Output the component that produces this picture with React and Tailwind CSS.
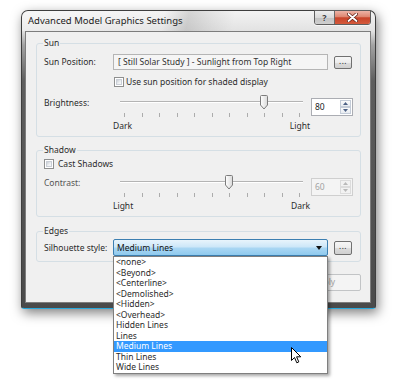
import React from "react";

function DotsButton() {
  return (
    <div className="w-[18px] h-[13px] rounded-[2px] border border-[#707070] bg-[linear-gradient(180deg,#f6f6f6_0%,#ececec_50%,#dcdcdc_51%,#d0d0d0_100%)] flex items-center justify-center">
      <span className="text-[8px] leading-none text-[#222] -mt-[3px] tracking-[0.5px]">...</span>
    </div>
  );
}

function Checkbox() {
  return (
    <div className="w-[10px] h-[10px] border border-[#8e8f8f] bg-white p-[1px] shrink-0">
      <div className="w-full h-full border border-[#c9ced6] bg-[linear-gradient(135deg,#c9ced5_0%,#eef0f2_60%,#f8f8f8_100%)]" />
    </div>
  );
}

function Slider({ id, thumb, left, right }) {
  const ticks = Array.from({ length: 11 }, (_, i) => 11 + i * 17.5);
  const cx = thumb;
  const d = `M ${cx - 3.5} 1.5 Q ${cx - 3.5} 0.5 ${cx - 2.5} 0.5 L ${cx + 2.5} 0.5 Q ${cx + 3.5} 0.5 ${cx + 3.5} 1.5 L ${cx + 3.5} 10 L ${cx} 14 L ${cx - 3.5} 10 Z`;
  return (
    <div className="w-[197px] flex flex-col shrink-0">
      <svg width="197" height="24" className="block">
        <defs>
          <linearGradient id={id} x1="0" y1="0" x2="1" y2="0">
            <stop offset="0" stopColor="#ffffff" />
            <stop offset="1" stopColor="#d9d9d9" />
          </linearGradient>
        </defs>
        <rect x="7" y="6" width="183" height="1" fill="#b4b4b4" />
        <rect x="7" y="7" width="183" height="1" fill="#ffffff" />
        {ticks.map((t) => (
          <rect key={t} x={Math.round(t)} y="18" width="1" height="4" fill="#acacac" />
        ))}
        <path d={d} fill={`url(#${id})`} stroke="#7c7c7c" strokeWidth="1" />
      </svg>
      <div className="mt-[1px] h-[12px] flex justify-between text-[8.5px] leading-[12px] text-[#2b2b2b]">
        <span>{left}</span>
        <span>{right}</span>
      </div>
    </div>
  );
}

function SpinArrow({ up, color }) {
  return (
    <svg width="5" height="3" className="block">
      {up ? <path d="M0 3 L2.5 0 L5 3 Z" fill={color} /> : <path d="M0 0 L2.5 3 L5 0 Z" fill={color} />}
    </svg>
  );
}

function Spin({ value, disabled }) {
  const arrow = disabled ? "#b9b9b9" : "#4d6185";
  return (
    <div
      className={
        disabled
          ? "w-[42px] h-[18px] border border-[#cfcfcf] bg-[#f4f4f4] flex shrink-0"
          : "w-[42px] h-[18px] border border-[#abadb3] bg-white flex shrink-0"
      }
    >
      <div
        className={
          disabled
            ? "flex-1 pl-[3px] text-[8.5px] leading-[16px] text-[#a3a3a3]"
            : "flex-1 pl-[3px] text-[8.5px] leading-[16px] text-[#222]"
        }
      >
        {value}
      </div>
      <div className="w-[13px] flex flex-col p-[1px] gap-[0px]">
        <div
          className={
            disabled
              ? "flex-1 border border-[#dcdcdc] bg-[#f2f2f2] flex items-center justify-center"
              : "flex-1 border border-[#c4ccd8] bg-[linear-gradient(180deg,#fbfbfb,#e8ecf1)] flex items-center justify-center"
          }
        >
          <SpinArrow up color={arrow} />
        </div>
        <div
          className={
            disabled
              ? "flex-1 border border-[#dcdcdc] bg-[#f2f2f2] flex items-center justify-center"
              : "flex-1 border border-[#c4ccd8] bg-[linear-gradient(180deg,#fbfbfb,#e8ecf1)] flex items-center justify-center"
          }
        >
          <SpinArrow color={arrow} />
        </div>
      </div>
    </div>
  );
}

function Group({ title, height, children }) {
  return (
    <div className={`relative w-[325px] rounded-[3px] border border-[#d5dfe5] ${height}`}>
      <span className="absolute -top-[7px] left-[6px] px-[1px] bg-[#f0f0f0] text-[8.5px] leading-[12px] text-[#2b2b2b]">
        {title}
      </span>
      {children}
    </div>
  );
}

const items = [
  "<none>",
  "<Beyond>",
  "<Centerline>",
  "<Demolished>",
  "<Hidden>",
  "<Overhead>",
  "Hidden Lines",
  "Lines",
  "Medium Lines",
  "Thin Lines",
  "Wide Lines",
];

function DropdownList() {
  return (
    <div className="absolute top-full left-0 z-20 w-[215px] border border-[#7f7f7f] bg-white shadow-[2px_2px_3px_rgba(0,0,0,0.35)]">
      {items.map((it) => (
        <div
          key={it}
          className={
            it === "Medium Lines"
              ? "h-[10.5px] pl-[2px] text-[8.5px] leading-[10.5px] bg-[#3399ff] text-white"
              : "h-[10.5px] pl-[2px] text-[8.5px] leading-[10.5px] text-[#2b2b2b]"
          }
        >
          {it}
        </div>
      ))}
    </div>
  );
}

function TitleButtons() {
  return (
    <div className="flex -mt-[1px] mr-[4px] h-[15px] rounded-b-[3px] border border-[#5e5e5e] overflow-hidden shadow-[0_1px_0_rgba(255,255,255,0.6)]">
      <div className="w-[20px] h-full bg-[linear-gradient(180deg,#eeeeee_0%,#d9d9d9_50%,#c2c2c2_51%,#cfcfcf_100%)] border-r border-[#6a6a6a] flex items-center justify-center">
        <span className="text-[9px] leading-none font-bold text-[#3a3a3a] [text-shadow:0_0_1px_#fff]">?</span>
      </div>
      <div className="w-[35px] h-full bg-[linear-gradient(180deg,#edb3a6_0%,#de8670_45%,#c8442a_52%,#d45a3c_100%)] flex items-center justify-center">
        <svg width="11" height="9" viewBox="0 0 11 9">
          <path d="M1.5 1 L9.5 8 M9.5 1 L1.5 8" stroke="#5a1a10" strokeWidth="3.2" strokeLinecap="round" />
          <path d="M1.5 1 L9.5 8 M9.5 1 L1.5 8" stroke="#ffffff" strokeWidth="1.8" strokeLinecap="round" />
        </svg>
      </div>
    </div>
  );
}

function Window() {
  return (
    <div className="relative w-[355px] h-[299px] rounded-t-[7px] rounded-b-[3px] border border-[#3e3e3e] border-b-[#27a8dc] bg-[linear-gradient(180deg,#f3f3f3_0px,#e2e2e2_20px,#a3a3a3_34px,#5e5e5e_70px,#4a4a4a_100%)] shadow-[2px_4px_12px_rgba(0,0,0,0.5)] flex flex-col">
      <div className="h-[20px] flex items-start rounded-t-[6px] bg-[linear-gradient(100deg,rgba(255,255,255,0.35)_0%,rgba(255,255,255,0.1)_40%,rgba(0,0,0,0.12)_47%,rgba(0,0,0,0.05)_54%,rgba(255,255,255,0)_60%)]">
        <div className="flex-1 pl-[6px] h-[20px] text-[9.5px] leading-[20px] text-[#1c1c1c]">
          Advanced Model Graphics Settings
        </div>
        <TitleButtons />
      </div>
      <div className="ml-[3px] w-[346px] h-[272px] border border-[#7d7d7d] bg-[#f0f0f0]">
        <div className="pl-[10px] pt-[11px] flex flex-col">
          <Group title="Sun" height="h-[94px]">
            <div className="pl-[7px] pt-[10px] flex flex-col">
              <div className="h-[16px] flex items-center">
                <div className="w-[69px] text-[8.5px] leading-[16px] text-[#2b2b2b]">Sun Position:</div>
                <div className="w-[215px] h-[16px] border border-[#b5b5b5] bg-[#f5f5f5] pl-[4px] text-[8.5px] leading-[14px] text-[#333] whitespace-nowrap overflow-hidden">
                  [ Still Solar Study ] - Sunlight from Top Right
                </div>
                <div className="ml-[6px]">
                  <DotsButton />
                </div>
              </div>
              <div className="mt-[5px] h-[14px] flex items-center pl-[70px] gap-[2px]">
                <Checkbox />
                <span className="text-[8.5px] leading-[14px] text-[#2b2b2b] whitespace-nowrap">
                  Use sun position for shaded display
                </span>
              </div>
              <div className="mt-[6px] flex items-start">
                <div className="w-[69px] text-[8.5px] leading-[16px] text-[#2b2b2b]">Brightness:</div>
                <Slider id="g1" thumb={151} left="Dark" right="Light" />
                <div className="ml-[1px] mt-[3px]">
                  <Spin value="80" />
                </div>
              </div>
            </div>
          </Group>
          <div className="mt-[13px]">
            <Group title="Shadow" height="h-[67px]">
              <div className="pl-[7px] pt-[6px] flex flex-col">
                <div className="h-[14px] flex items-center gap-[4px]">
                  <Checkbox />
                  <span className="text-[8.5px] leading-[14px] text-[#2b2b2b]">Cast Shadows</span>
                </div>
                <div className="mt-[4px] flex items-start">
                  <div className="w-[69px] text-[8.5px] leading-[16px] text-[#555]">Contrast:</div>
                  <Slider id="g2" thumb={116} left="Light" right="Dark" />
                  <div className="ml-[1px] mt-[3px]">
                    <Spin value="60" disabled />
                  </div>
                </div>
              </div>
            </Group>
          </div>
          <div className="mt-[14px]">
            <Group title="Edges" height="h-[31px]">
              <div className="pl-[7px] pt-[7px] flex items-center h-[24px]">
                <div className="w-[69px] text-[8.5px] leading-[17px] text-[#2b2b2b] whitespace-nowrap">
                  Silhouette style:
                </div>
                <div className="relative">
                  <div className="w-[215px] h-[17px] rounded-[2px] border border-[#3c7fb1] bg-[linear-gradient(180deg,#e8f4fc_0%,#cde7f8_45%,#a9d6f3_55%,#8fcaee_100%)] flex items-center pl-[3px] pr-[5px]">
                    <span className="flex-1 text-[8.5px] leading-[15px] text-[#111]">Medium Lines</span>
                    <svg width="6" height="4" className="block">
                      <path d="M0 0 L6 0 L3 4 Z" fill="#111" />
                    </svg>
                  </div>
                  <DropdownList />
                </div>
                <div className="ml-[6px]">
                  <div className="w-[18px] h-[14px] rounded-[2px] border border-[#707070] bg-[linear-gradient(180deg,#f6f6f6_0%,#ececec_50%,#dcdcdc_51%,#d0d0d0_100%)] flex items-center justify-center">
                    <span className="text-[8px] leading-none text-[#222] -mt-[3px] tracking-[0.5px]">...</span>
                  </div>
                </div>
              </div>
            </Group>
          </div>
          <div className="mt-[12px] w-[325px] flex justify-end gap-[6px]">
            <div className="w-[74px] h-[17px] rounded-[2px] border border-[#707070] bg-[linear-gradient(180deg,#f2f2f2,#dddddd)]" />
            <div className="w-[74px] h-[17px] rounded-[2px] border border-[#707070] bg-[linear-gradient(180deg,#f2f2f2,#dddddd)]" />
            <div className="w-[74px] h-[17px] rounded-[2px] border border-[#c2c4c6] bg-[#f4f4f4] flex items-center justify-center text-[8.5px] text-[#a3a3a3]">
              Apply
            </div>
          </div>
        </div>
      </div>
    </div>
  );
}

function Cursor() {
  return (
    <svg width="11" height="17" viewBox="0 0 11 17" className="absolute left-[291px] top-[347px] z-30">
      <path
        d="M0.5 0.5 L0.5 13.5 L3.5 10.5 L5.8 15.8 L7.8 14.9 L5.6 9.8 L9.8 9.8 Z"
        fill="#ffffff"
        stroke="#000000"
        strokeWidth="1"
        strokeLinejoin="miter"
      />
    </svg>
  );
}

export default function App() {
  return (
    <div className="relative w-[400px] h-[384px] bg-white overflow-hidden font-['Noto_Sans',sans-serif] text-[#2b2b2b]">
      <div className="pt-[10px] pl-[21px]">
        <Window />
      </div>
      <Cursor />
    </div>
  );
}
